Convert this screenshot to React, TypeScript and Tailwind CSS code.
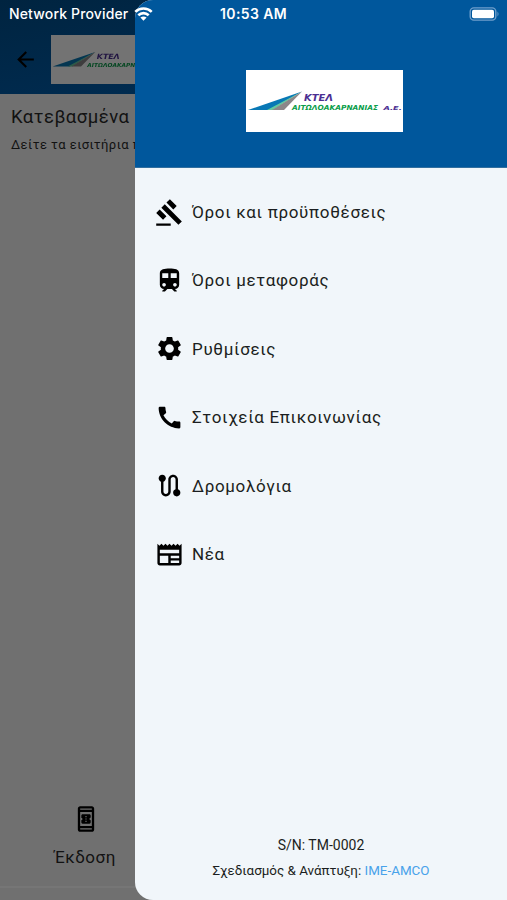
import type { ReactNode } from 'react';
import {
  MdArrowBack,
  MdCall,
  MdGavel,
  MdNewspaper,
  MdOutlineBookOnline,
  MdRoute,
  MdSettings,
  MdTrain,
} from 'react-icons/md';

interface MenuItem {
  label: string;
  icon: ReactNode;
}

const menuItems: MenuItem[] = [
  { label: 'Όροι και προϋποθέσεις', icon: <MdGavel /> },
  { label: 'Όροι μεταφοράς', icon: <MdTrain /> },
  { label: 'Ρυθμίσεις', icon: <MdSettings /> },
  { label: 'Στοιχεία Επικοινωνίας', icon: <MdCall /> },
  { label: 'Δρομολόγια', icon: <MdRoute /> },
  { label: 'Νέα', icon: <MdNewspaper /> },
];

function Logo({ className }: { className: string }) {
  return (
    <svg viewBox="0 0 157 62" preserveAspectRatio="none" className={className}>
      <rect width="157" height="62" fill="#fff" />
      <path d="M2 40 L56 21.5 L24 40 Z" fill="#0878b5" />
      <path d="M21 40 L56 21.5 L27 40 Z" fill="#63c9a0" />
      <path d="M26 40 L56 21.5 L38 40 Z" fill="#8c8789" />
      <g fontFamily="'DejaVu Sans', sans-serif" fontWeight="700" fontStyle="italic">
        <text x="58" y="30.8" fontSize="9" fill="#4b2f92" textLength="29" lengthAdjust="spacingAndGlyphs">
          ΚΤΕΛ
        </text>
        <text x="46" y="40.3" fontSize="7" fill="#0a9d4a" textLength="86" lengthAdjust="spacingAndGlyphs">
          ΑΙΤΩΛΟΑΚΑΡΝΑΝΙΑΣ
        </text>
        <text x="137.5" y="39.8" fontSize="5.5" fill="#4b2f92" textLength="18.5" lengthAdjust="spacingAndGlyphs">
          Α.Ε.
        </text>
      </g>
    </svg>
  );
}

function StatusBar() {
  return (
    <div className="absolute inset-x-0 top-0 z-20 flex h-7 items-center pl-[9px] pr-[7px] font-['Inter',sans-serif] text-sm text-white">
      <span className="w-[122px] whitespace-nowrap text-[14px] font-medium tracking-[0.15px]">Network Provider</span>
      <svg viewBox="0 0 18 14" className="ml-[3px] h-[14px] w-[19px]" fill="none" stroke="#fff" strokeWidth="2.6">
        <path d="M.8 4.9 C5.3 .4 12.7 .4 17.2 4.9" />
        <path d="M3.8 8.3 C6.8 5.4 11.2 5.4 14.2 8.3" />
        <path d="M5.9 10.6 Q9 8.2 12.1 10.6 L9 13.7Z" fill="#fff" stroke="none" />
      </svg>
      <span className="ml-[67px] whitespace-nowrap text-[14px] font-semibold tracking-[0.4px]">10:53 AM</span>
      <svg viewBox="0 0 31 14" className="ml-auto h-[14px] w-[31px]">
        <rect x="1.2" y=".9" width="25.6" height="12.2" rx="3.6" fill="none" stroke="#6f9fcb" strokeWidth="1.4" />
        <rect x="3" y="2.8" width="22" height="8.4" rx="1.8" fill="#fff" />
        <path d="M28.5 4.5 Q30.5 7 28.5 9.5Z" fill="#6f9fcb" />
      </svg>
    </div>
  );
}

function TicketsPage() {
  return (
    <div className="flex h-full flex-col bg-[#707070]">
      <header className="flex h-[94px] items-end bg-linear-to-br from-[#002440] to-[#002f59] pb-[10px] pl-[13px]">
        <MdArrowBack className="mb-3 size-[25px] text-black" />
        <Logo className="ml-[13px] h-[49px] w-[124px] brightness-[0.45]" />
      </header>
      <main className="flex-1 pl-[11px] pt-[11px] text-[#121212]">
        <h1 className="whitespace-nowrap text-[18.5px] leading-[25px] tracking-[0.48px]">Κατεβασμένα</h1>
        <p className="mt-[5px] whitespace-nowrap text-[13px] leading-[19px] tracking-[0.45px]">
          Δείτε τα εισιτήρια που έχετε κατεβάσει
        </p>
      </main>
      <nav className="flex h-[96px] w-[171px] flex-col items-center text-[#121212]">
        <MdOutlineBookOnline className="mt-[1px] size-[28px] text-black" />
        <span className="mt-[12px] -ml-[1px] text-[17px] leading-6 tracking-[0.5px]">Έκδοση</span>
      </nav>
      <div className="-mt-[14px] h-[14px] border-t-2 border-[#767676]" />
    </div>
  );
}

function Drawer() {
  return (
    <aside className="absolute inset-y-0 right-0 z-10 flex w-[372px] flex-col overflow-hidden rounded-l-[18px] bg-[#f1f6fa]">
      <div className="flex h-[168px] justify-center border-b border-[#326f9f] bg-[#00579c] pl-[6px] pt-[70px]">
        <Logo className="h-[62px] w-[157px]" />
      </div>
      <ul className="flex-1 pl-[20px] pt-[10px]">
        {menuItems.map((item) => (
          <li key={item.label} className="flex h-[68.4px] items-center">
            <span className="text-[29px] text-black">{item.icon}</span>
            <span className="ml-[8px] mt-[1px] whitespace-nowrap text-[17px] tracking-[0.66px] text-[#1b1e20]">
              {item.label}
            </span>
          </li>
        ))}
      </ul>
      <footer className="pb-[16px] text-center leading-[26px] text-[#1b1e20]">
        <p className="text-[14px]">S/N: TM-0002</p>
        <p className="text-[13.4px]">
          Σχεδιασμός &amp; Ανάπτυξη: <a className="text-[#48a2ea]">IME-AMCO</a>
        </p>
      </footer>
    </aside>
  );
}

export default function App() {
  return (
    <div className="relative h-[900px] w-[507px] overflow-hidden font-['Roboto','Noto_Sans',sans-serif]">
      <TicketsPage />
      <Drawer />
      <StatusBar />
    </div>
  );
}
